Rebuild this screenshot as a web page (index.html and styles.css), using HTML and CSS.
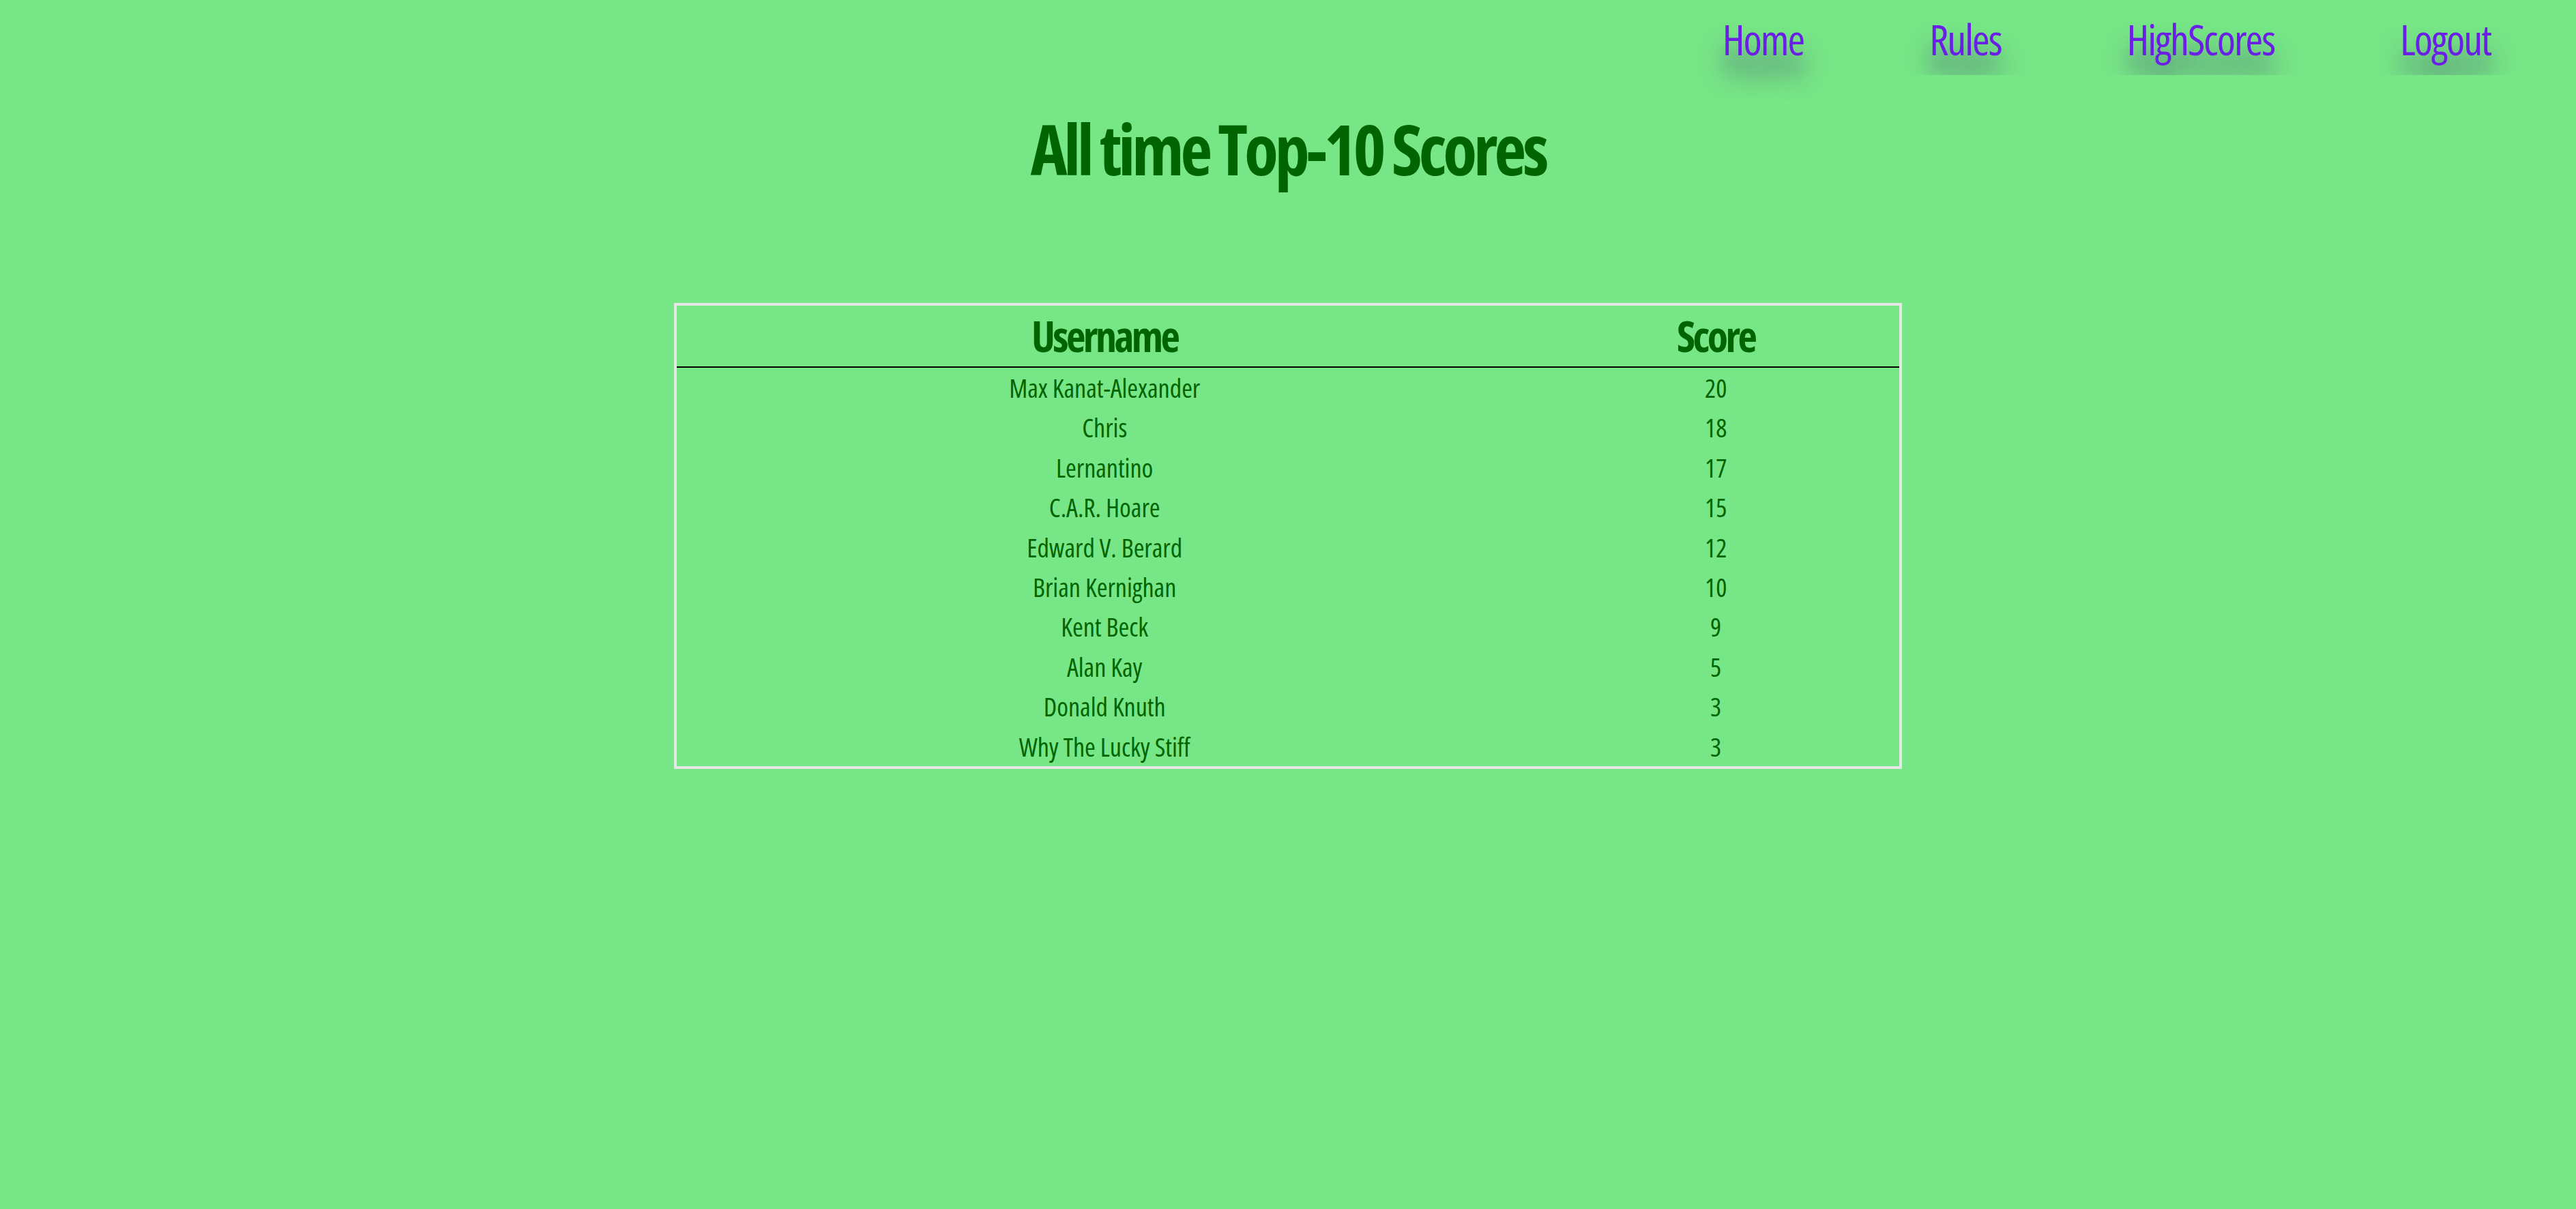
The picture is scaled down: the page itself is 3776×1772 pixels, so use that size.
FILE: index.html
```html
<!DOCTYPE html>
<html lang="en">
<head>
<meta charset="utf-8">
<title>HighScores</title>
<link rel="stylesheet" href="styles.css">
</head>
<body>
<nav class="topnav">
  <a class="navlink current" href="#">Home</a>
  <a class="navlink" href="#">Rules</a>
  <a class="navlink" href="#">HighScores</a>
  <a class="navlink" href="#">Logout</a>
</nav>
<main class="content">
  <h1 class="title">All time Top-10 Scores</h1>
  <table class="scores">
    <thead>
      <tr><th class="col-user">Username</th><th class="col-score">Score</th></tr>
    </thead>
    <tbody>
      <tr><td>Max Kanat-Alexander</td><td>20</td></tr>
      <tr><td>Chris</td><td>18</td></tr>
      <tr><td>Lernantino</td><td>17</td></tr>
      <tr><td>C.A.R. Hoare</td><td>15</td></tr>
      <tr><td>Edward V. Berard</td><td>12</td></tr>
      <tr><td>Brian Kernighan</td><td>10</td></tr>
      <tr><td>Kent Beck</td><td>9</td></tr>
      <tr><td>Alan Kay</td><td>5</td></tr>
      <tr><td>Donald Knuth</td><td>3</td></tr>
      <tr><td>Why The Lucky Stiff</td><td>3</td></tr>
    </tbody>
  </table>
</main>
</body>
</html>
```
FILE: styles.css
```css
html, body {
  margin: 0;
  padding: 0;
  background: #77e687;
  min-height: 100%;
}
body {
  font-family: "Open Sans", "Roboto", "Liberation Sans", sans-serif;
  font-stretch: 75%;
  color: #006400;
}
.topnav {
  display: flex;
  justify-content: flex-end;
  align-items: flex-start;
  gap: 184px;
  height: 110px;
  box-sizing: border-box;
  padding: 21px 125px 0 0;
}
.navlink {
  font-size: 62px;
  line-height: 72.6px;
  letter-spacing: -2px;
  color: #6a1ee6;
  text-decoration: none;
  text-shadow: 0 30px 34px rgb(80, 100, 118);
}
.navlink.current {
  position: relative;
  z-index: 2;
}
.content {
  position: relative;
  z-index: 1;
  background: #77e687;
  padding: 1px 0 0;
  min-height: 1660px;
  box-sizing: border-box;
}
.title {
  margin: 43px 0 0;
  font-size: 102px;
  line-height: 127px;
  font-weight: 700;
  letter-spacing: -5px;
  text-align: center;
  color: #006400;
}
.scores {
  width: 1800px;
  margin: 163px auto 0;
  border: 4px solid #e6e6e6;
  border-collapse: separate;
  border-spacing: 0;
  text-align: center;
}
.scores th {
  font-size: 62px;
  font-weight: 700;
  letter-spacing: -3.5px;
  line-height: 89px;
  padding: 0;
  border-bottom: 2px solid #000;
}
.col-user { width: 70%; }
.col-score { width: 30%; }
.scores td {
  font-size: 38px;
  line-height: 57.4px;
  padding: 1px 0 0;
}
```
